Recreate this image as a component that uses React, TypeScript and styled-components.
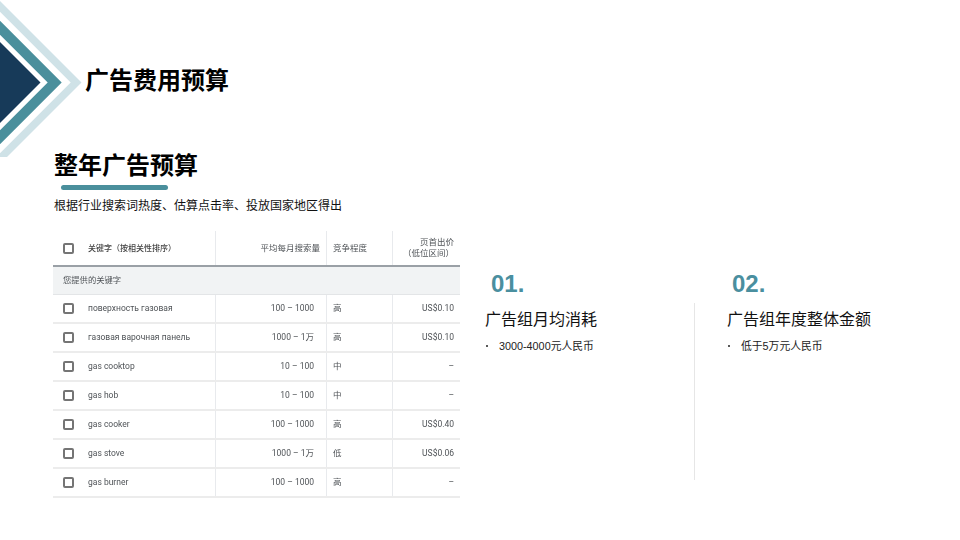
import React from "react";
import styled, { createGlobalStyle } from "styled-components";

const Global = createGlobalStyle`
  html, body { margin: 0; padding: 0; background: #fff; }
  body { width: 960px; height: 540px; overflow: hidden; font-family: "Noto Sans CJK SC", "Liberation Sans", sans-serif; color: #000; }
`;
const Page = styled.div`width: 960px; height: 540px; display: flex; flex-direction: column;`;
const Header = styled.header`height: 158px; display: flex; align-items: center; gap: 3px;`;
const Mark = styled.svg`width: 82px; height: 158px; flex: none; display: block;`;
const PageTitle = styled.h1`margin: 0; font-size: 24px; line-height: 32px; font-weight: 700;`;
const Main = styled.main`display: flex; padding-left: 53px;`;
const LeftCol = styled.section`width: 407px; flex: none; margin-right: 25px;`;
const SectionTitle = styled.h2`margin: -9px 0 0 1px; font-size: 24px; line-height: 30px; height: 30px; font-weight: 700;`;
const Accent = styled.div`width: 107px; height: 5px; margin: 6px 0 0 8px; border-radius: 3px; background: #4a8f9c;`;
const Sub = styled.p`margin: 7px 0 0 1px; font-size: 12px; line-height: 16px; color: #111;`;
const Table = styled.div`margin-top: 18px; filter: blur(0.3px); color: #4f5357; font-family: Roboto, "Noto Sans CJK SC", sans-serif; font-size: 8.5px;`;
const Cols = styled.div<{ $h: number; $line: string; $lw: number }>`
  display: grid; grid-template-columns: 163px 111px 66px 67px; height: ${p => p.$h}px; box-sizing: border-box;
  border-bottom: ${p => p.$lw}px solid ${p => p.$line};
`;
const Cell = styled.div<{ $right?: boolean; $pr?: number }>`
  display: flex; align-items: center; box-sizing: border-box;
  justify-content: ${p => (p.$right ? "flex-end" : "flex-start")};
  text-align: ${p => (p.$right ? "right" : "left")};
  padding-right: ${p => p.$pr ?? 0}px; padding-left: ${p => (p.$right ? 0 : 6)}px;
  border-right: 1px solid #e8eaed; line-height: 11px;
  &:last-child { border-right: 0; }
`;
const KeyCell = styled(Cell)`padding-left: 10px; gap: 14px;`;
const Box = styled.span`width: 11px; height: 11px; box-sizing: border-box; border: 2px solid #757575; border-radius: 2px; flex: none;`;
const HeadKey = styled.span`font-size: 8px; font-weight: 500; color: #444; white-space: nowrap;`;
const Group = styled.div`height: 28px; box-sizing: border-box; background: #f1f3f4; border-bottom: 1px solid #e3e5e7; display: flex; align-items: center; padding: 0 0 3px 10px; font-size: 8.3px;`;
const RightPanel = styled.section`
  width: 440px; margin-top: 112px; display: grid; grid-template-columns: 209px 1fr; grid-template-rows: 28px 177px; row-gap: 5px;
`;
const Num = styled.div<{ $indent: number }>`
  font-family: "Liberation Sans", Arial, sans-serif; font-weight: 700; font-size: 24px; line-height: 28px; color: #4a8f9f; padding-left: ${p => p.$indent}px;
`;
const Body = styled.div<{ $divider?: boolean }>`
  border-left: ${p => (p.$divider ? "1px solid #e6e6e6" : "0")}; padding-left: ${p => (p.$divider ? 32 : 0)}px;
`;
const ItemTitle = styled.h3`margin: 5px 0 0; font-size: 16px; line-height: 20px; font-weight: 400; color: #111;`;
const Bullet = styled.div`margin-top: 10px; display: flex; align-items: center; font-size: 10.8px; line-height: 16px; color: #222; font-family: "Liberation Sans", "Noto Sans CJK SC", sans-serif;
  &::before { content: ""; width: 2px; height: 2px; border-radius: 50%; background: #222; margin: 0 11px 0 1px; }
`;

const rows: [string, string, string, string][] = [
  ["поверхность газовая", "100 – 1000", "高", "US$0.10"],
  ["газовая варочная панель", "1000 – 1万", "高", "US$0.10"],
  ["gas cooktop", "10 – 100", "中", "–"],
  ["gas hob", "10 – 100", "中", "–"],
  ["gas cooker", "100 – 1000", "高", "US$0.40"],
  ["gas stove", "1000 – 1万", "低", "US$0.06"],
  ["gas burner", "100 – 1000", "高", "–"],
];

export default function App() {
  return (
    <Page>
      <Global />
      <Header>
        <Mark viewBox="0 0 82 158">
          <polygon points="0,1 81.5,82.5 7,157 0,157 0,153.2 70.7,82.5 0,11.8" fill="#cfe2e7" />
          <polygon points="0,20.8 61.7,82.5 0,144.2 0,130.2 47.7,82.5 0,34.8" fill="#4a8f9c" />
          <polygon points="0,42 40.5,82.5 0,123" fill="#173a59" />
        </Mark>
        <PageTitle>广告费用预算</PageTitle>
      </Header>
      <Main>
        <LeftCol>
          <SectionTitle>整年广告预算</SectionTitle>
          <Accent />
          <Sub>根据行业搜索词热度、估算点击率、投放国家地区得出</Sub>
          <Table>
            <Cols $h={36} $line="#9aa0a6" $lw={2}>
              <KeyCell><Box /><HeadKey>关键字（按相关性排序）</HeadKey></KeyCell>
              <Cell $right $pr={6}>平均每月搜索量</Cell>
              <Cell>竞争程度</Cell>
              <Cell $right $pr={6}>页首出价<br />（低位区间）</Cell>
            </Cols>
            <Group>您提供的关键字</Group>
            {rows.map(r => (
              <Cols key={r[0]} $h={29} $line="#ececec" $lw={2}>
                <KeyCell><Box /><span>{r[0]}</span></KeyCell>
                <Cell $right $pr={12}>{r[1]}</Cell>
                <Cell>{r[2]}</Cell>
                <Cell $right $pr={6}>{r[3]}</Cell>
              </Cols>
            ))}
          </Table>
        </LeftCol>
        <RightPanel>
          <Num $indent={6}>01.</Num>
          <Num $indent={38}>02.</Num>
          <Body>
            <ItemTitle>广告组月均消耗</ItemTitle>
            <Bullet>3000-4000元人民币</Bullet>
          </Body>
          <Body $divider>
            <ItemTitle>广告组年度整体金额</ItemTitle>
            <Bullet>低于5万元人民币</Bullet>
          </Body>
        </RightPanel>
      </Main>
    </Page>
  );
}
